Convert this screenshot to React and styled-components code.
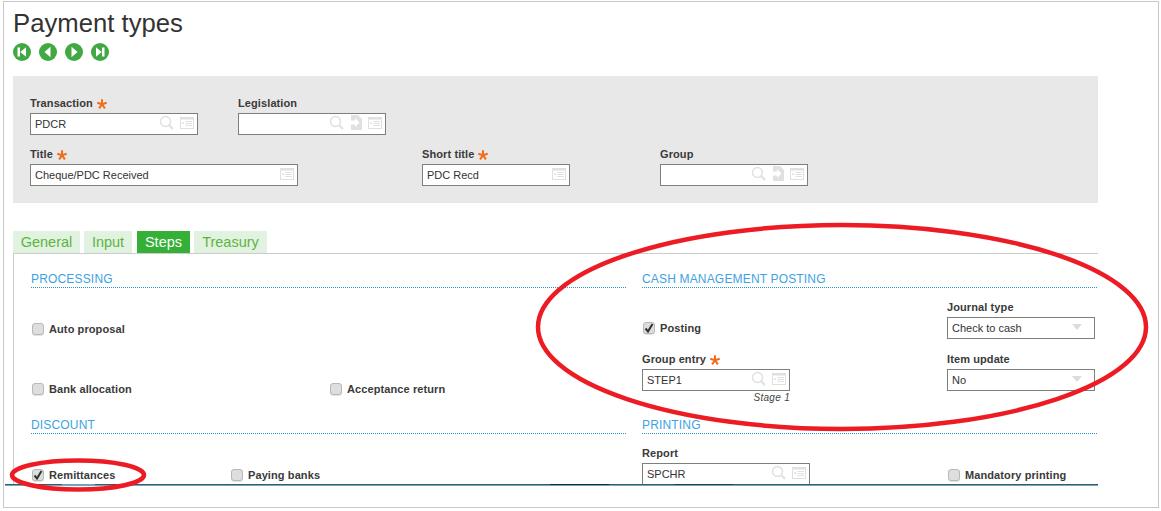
import React from 'react';
import styled, { createGlobalStyle } from 'styled-components';

const GlobalStyle = createGlobalStyle`
  html, body {
    margin: 0;
    padding: 0;
    background: #fff;
  }

  body {
    font-family: "Liberation Sans", Arial, sans-serif;
    color: #333;
  }
`;

const Frame = styled.div`
  position: relative;
  box-sizing: border-box;
  width: 1156px;
  height: 507px;
  margin: 1px 0 0 3px;
  border: 1px solid #c8c8c8;
  background: #fff;
`;

const Workspace = styled.div`
  box-sizing: border-box;
  width: 1093px;
  height: 482px;
  margin-left: 1px;
  padding-left: 8px;
  overflow: hidden;
`;

// Bottom edge of the scrolled form: dark line with a teal one under it
const BottomRule = styled.div`
  width: 1093px;
  height: 2px;
  margin-left: 1px;
  background:
    linear-gradient(90deg, #4a5557 0 57px, #7f9fac 57px 90px, #4a5557 90px 545px, #1f2628 545px 604px, #4a5557 604px 669px, #2f393b 669px 728px, #4a5557 728px) top / 100% 1px no-repeat,
    linear-gradient(#63aec6, #63aec6) bottom / 100% 1px no-repeat;
`;

const Title = styled.h1`
  margin: 0;
  padding-top: 6px;
  height: 35px;
  font-size: 25.7px;
  line-height: 30px;
  font-weight: normal;
  color: #333;
`;

const NavBar = styled.div`
  display: flex;
  gap: 8px;
  height: 33px;
`;

const NavButton = styled.svg`
  width: 18px;
  height: 18px;
  display: block;
`;

const HeaderPanel = styled.div`
  display: flex;
  flex-direction: column;
  gap: 13px;
  box-sizing: border-box;
  width: 1085px;
  height: 127px;
  padding: 21px 17px 0;
  background: #e8e8e8;
`;

const FormRow = styled.div`
  display: flex;
  gap: ${(p) => p.$gap || 0}px;
`;

const Field = styled.div`
  width: ${(p) => p.$width}px;
`;

const Label = styled.label`
  display: flex;
  align-items: center;
  gap: 4px;
  height: 16px;
  padding-bottom: 4px;
  box-sizing: border-box;
  font-size: 11px;
  font-weight: bold;
  letter-spacing: 0.1px;
  color: #3a3a3a;
`;

const Star = styled.svg`
  display: block;
  flex: none;
  width: 10px;
  height: 10px;
  margin-top: 2px;
`;

const InputBox = styled.div`
  display: flex;
  align-items: center;
  gap: 6px;
  box-sizing: border-box;
  height: 22px;
  padding: 0 3px 0 4px;
  border: 1px solid #7b8078;
  background: #fff;
  font-size: 11px;
  color: #333;
`;

const InputText = styled.span`
  flex-grow: 1;
`;

const Hint = styled.div`
  height: 12px;
  font-size: 10px;
  line-height: 13px;
  font-style: italic;
  letter-spacing: 0.3px;
  text-align: right;
  color: #444;
`;

const ToolIcon = styled.svg`
  flex: none;
  display: block;
  width: ${(p) => p.$width || 15}px;
  height: ${(p) => p.$height || 15}px;
  margin-top: -3px;
`;

const Arrow = styled.span`
  width: 0;
  height: 0;
  margin-right: 9px;
  margin-top: -3px;
  border-left: 5px solid transparent;
  border-right: 5px solid transparent;
  border-top: 6px solid #dcdcdc;
`;

const Tabs = styled.div`
  display: flex;
  margin-top: 28px;
  height: 22px;
`;

const Tab = styled.div`
  box-sizing: border-box;
  width: ${(p) => p.$width}px;
  margin-right: ${(p) => p.$after}px;
  font-size: 14.5px;
  line-height: 22px;
  text-align: center;
  background: ${(p) => (p.$active ? '#33b035' : '#e1f3e0')};
  color: ${(p) => (p.$active ? '#fff' : '#5db340')};
`;

const TabBody = styled.div`
  display: grid;
  grid-template-columns: 595px 455px;
  grid-template-rows: 162px auto;
  column-gap: 16px;
  box-sizing: border-box;
  width: 1085px;
  height: 231px;
  padding-left: 17px;
  border-top: 1px solid #ccc;
  border-left: 1px solid #ccc;
`;

const Section = styled.section`
  padding-top: ${(p) => (p.$first ? 16 : 0)}px;
`;

const SectionHead = styled.h2`
  box-sizing: border-box;
  height: 18px;
  margin: 0;
  font-size: 12px;
  line-height: 19px;
  font-weight: normal;
  letter-spacing: 0.17px;
  color: #3da2e4;
  border-bottom: 1px dotted #2a94c8;
`;

const CheckColumn = styled.div`
  display: flex;
  flex-direction: column;
  gap: 46px;
  padding-top: 34px;
`;

const CheckRow = styled.div`
  display: grid;
  grid-template-columns: ${(p) => p.$first}px auto;
`;

const CheckItem = styled.div`
  display: flex;
  align-items: center;
  gap: 5px;
  height: 14px;
  font-size: 11px;
  font-weight: bold;
  letter-spacing: 0.1px;
  color: #3a3a3a;
`;

const Box = styled.span`
  display: flex;
  align-items: center;
  justify-content: center;
  box-sizing: border-box;
  width: 12px;
  height: 12px;
  margin-left: 1px;
  border: 1px solid #b8b8b8;
  border-radius: 3px;
  background: #dedede;
  box-shadow: 0 1px 0 #e4e4e4;
`;

const RightGrid = styled.div`
  display: grid;
  grid-template-columns: 305px 148px;
  grid-auto-rows: 38px;
  row-gap: 14px;
  padding-top: 13px;
`;

const PostingCell = styled.div`
  align-self: end;
  padding-bottom: 4px;
`;

const MandatoryCell = styled.div`
  padding-top: 21px;
`;

const Annotation = styled.svg`
  position: absolute;
  left: -4px;
  top: -2px;
  width: 1161px;
  height: 511px;
  pointer-events: none;
`;

const Nav = ({ kind }) => (
  <NavButton viewBox="0 0 18 18">
    <circle cx="9" cy="9" r="9" fill="#42a843" />
    {kind === 'first' && (
      <g fill="#fff">
        <rect x="4.5" y="4.5" width="2.5" height="9" />
        <path d="M13 4.2 V13.8 L7.3 9 Z" />
      </g>
    )}
    {kind === 'prev' && <path d="M11.5 3.8 V14.2 L5.5 9 Z" fill="#fff" />}
    {kind === 'next' && <path d="M6.5 3.8 V14.2 L12.5 9 Z" fill="#fff" />}
    {kind === 'last' && (
      <g fill="#fff">
        <rect x="11" y="4.5" width="2.5" height="9" />
        <path d="M5 4.2 V13.8 L10.7 9 Z" />
      </g>
    )}
  </NavButton>
);

const RequiredStar = () => (
  <Star viewBox="0 0 10 10">
    <path
      d="M5 5.2 V0.3 M5 5.2 L9.7 3.7 M5 5.2 L7.9 9.4 M5 5.2 L2.1 9.4 M5 5.2 L0.3 3.7"
      fill="none"
      stroke="#f26a1b"
      strokeWidth="2"
    />
  </Star>
);

const Search = () => (
  <ToolIcon viewBox="0 0 15 15">
    <circle cx="6.5" cy="6.5" r="5" fill="none" stroke="#e0e0e0" strokeWidth="1.4" />
    <path d="M10.3 10.3 L14 14" stroke="#e0e0e0" strokeWidth="2" />
  </ToolIcon>
);

const Jump = () => (
  <ToolIcon viewBox="0 0 12 15" $width={12}>
    <path d="M1 0 H8 L12 4 V15 H1 Z" fill="#e0e0e0" />
    <path d="M0 5.5 H5 V3 L9.5 7.5 L5 12 V9.5 H0 Z" fill="#fff" />
  </ToolIcon>
);

const Detail = () => (
  <ToolIcon viewBox="0 0 14 12" $width={14} $height={12}>
    <rect x="0.5" y="0.5" width="13" height="11" fill="#fff" stroke="#e0e0e0" />
    <path d="M1 1 H13 V2.5 H1 Z M2 5.5 H4 V7 H2 Z M5.5 4 H12 V5 H5.5 Z M5.5 6 H12 V7 H5.5 Z M5.5 8 H12 V9 H5.5 Z" fill="#e0e0e0" />
  </ToolIcon>
);

const Check = ({ checked, children }) => (
  <CheckItem>
    <Box>
      {checked && (
        <svg width="10" height="10" viewBox="0 0 10 10">
          <path d="M1.5 5.5 L4 8.5 L8.5 1" fill="none" stroke="#333" strokeWidth="2" />
        </svg>
      )}
    </Box>
    {children}
  </CheckItem>
);

const LookupField = ({ label, required, value, width, search, jump, hint }) => (
  <Field $width={width}>
    <Label>
      {label}
      {required && <RequiredStar />}
    </Label>
    <InputBox>
      <InputText>{value}</InputText>
      {search && <Search />}
      {jump && <Jump />}
      <Detail />
    </InputBox>
    {hint && <Hint>{hint}</Hint>}
  </Field>
);

const SelectField = ({ label, value }) => (
  <Field $width={148}>
    <Label>{label}</Label>
    <InputBox>
      <InputText>{value}</InputText>
      <Arrow />
    </InputBox>
  </Field>
);

const App = () => (
  <>
    <GlobalStyle />
    <Frame>
      <Workspace>
        <Title>Payment types</Title>
        <NavBar>
          <Nav kind="first" />
          <Nav kind="prev" />
          <Nav kind="next" />
          <Nav kind="last" />
        </NavBar>
        <HeaderPanel>
          <FormRow $gap={40}>
            <LookupField label="Transaction" required value="PDCR" width={168} search />
            <LookupField label="Legislation" width={148} search jump />
          </FormRow>
          <FormRow>
            <LookupField label="Title" required value="Cheque/PDC Received" width={268} />
            <Field $width={124} />
            <LookupField label="Short title" required value="PDC Recd" width={148} />
            <Field $width={90} />
            <LookupField label="Group" width={148} search jump />
          </FormRow>
        </HeaderPanel>
        <Tabs>
          <Tab $width={67} $after={4}>General</Tab>
          <Tab $width={48} $after={5}>Input</Tab>
          <Tab $width={53} $after={4} $active>Steps</Tab>
          <Tab $width={73} $after={0}>Treasury</Tab>
        </Tabs>
        <TabBody>
          <Section $first>
            <SectionHead>PROCESSING</SectionHead>
            <CheckColumn>
              <Check>Auto proposal</Check>
              <CheckRow $first={298}>
                <Check>Bank allocation</Check>
                <Check>Acceptance return</Check>
              </CheckRow>
            </CheckColumn>
          </Section>
          <Section $first>
            <SectionHead>CASH MANAGEMENT POSTING</SectionHead>
            <RightGrid>
              <PostingCell>
                <Check checked>Posting</Check>
              </PostingCell>
              <SelectField label="Journal type" value="Check to cash" />
              <LookupField label="Group entry" required value="STEP1" width={148} search hint="Stage 1" />
              <SelectField label="Item update" value="No" />
            </RightGrid>
          </Section>
          <Section>
            <SectionHead>DISCOUNT</SectionHead>
            <CheckColumn>
              <CheckRow $first={199}>
                <Check checked>Remittances</Check>
                <Check>Paying banks</Check>
              </CheckRow>
            </CheckColumn>
          </Section>
          <Section>
            <SectionHead>PRINTING</SectionHead>
            <RightGrid>
              <LookupField label="Report" value="SPCHR" width={168} search />
              <MandatoryCell>
                <Check>Mandatory printing</Check>
              </MandatoryCell>
            </RightGrid>
          </Section>
        </TabBody>
      </Workspace>
      <BottomRule />
      <Annotation viewBox="0 0 1161 511">
        <ellipse cx="842" cy="327" rx="304" ry="102" fill="none" stroke="#ed1c24" strokeWidth="4.5" />
        <ellipse cx="78" cy="475" rx="66" ry="14.5" fill="none" stroke="#ed1c24" strokeWidth="4.5" />
      </Annotation>
    </Frame>
  </>
);

export default App;
